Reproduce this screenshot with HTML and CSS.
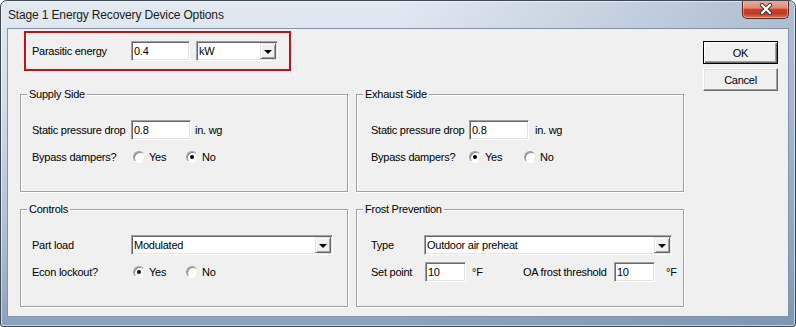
FILE: index.html
```html
<!DOCTYPE html>
<html lang="en">
<head>
    <meta charset="UTF-8">
    <meta name="viewport" content="width=device-width, initial-scale=1.0">
    <title>Stage 1 Energy Recovery Device Options</title>
    <link rel="stylesheet" href="styles.css">
</head>
<body>
    <div class="window">
        <div class="titlebar">
            <span class="title">Stage 1 Energy Recovery Device Options</span>
            <div class="close">
                <svg width="14" height="12" viewBox="0 0 14 12">
                    <path d="M3 2 L11 10 M11 2 L3 10" stroke="#3a3a3a" stroke-width="4.2" stroke-linecap="round"/>
                    <path d="M3 2 L11 10 M11 2 L3 10" stroke="#ffffff" stroke-width="2.2" stroke-linecap="round"/>
                </svg>
            </div>
        </div>

        <div class="client">
            <div class="main">
                <div class="highlight">
                    <span class="label">Parasitic energy</span>
                    <div class="textbox w59">0.4</div>
                    <div class="combo w82"><span>kW</span><span class="drop"></span></div>
                </div>

                <div class="groups">
                    <div class="group">
                        <span class="group-title">Supply Side</span>
                        <div class="row">
                            <span class="label">Static pressure drop</span>
                            <div class="textbox w60">0.8</div>
                            <span class="unit">in. wg</span>
                        </div>
                        <div class="row">
                            <span class="label">Bypass dampers?</span>
                            <label class="radio"><span class="mark"></span>Yes</label>
                            <label class="radio"><span class="mark checked"></span>No</label>
                        </div>
                    </div>

                    <div class="group right">
                        <span class="group-title">Exhaust Side</span>
                        <div class="row">
                            <span class="label lw98">Static pressure drop</span>
                            <div class="textbox w60">0.8</div>
                            <span class="unit wide">in. wg</span>
                        </div>
                        <div class="row">
                            <span class="label lw98">Bypass dampers?</span>
                            <label class="radio"><span class="mark checked"></span>Yes</label>
                            <label class="radio"><span class="mark"></span>No</label>
                        </div>
                    </div>

                    <div class="group">
                        <span class="group-title">Controls</span>
                        <div class="row">
                            <span class="label">Part load</span>
                            <div class="combo w202"><span>Modulated</span><span class="drop"></span></div>
                        </div>
                        <div class="row">
                            <span class="label">Econ lockout?</span>
                            <label class="radio"><span class="mark checked"></span>Yes</label>
                            <label class="radio"><span class="mark"></span>No</label>
                        </div>
                    </div>

                    <div class="group right">
                        <span class="group-title">Frost Prevention</span>
                        <div class="row">
                            <span class="label lw53">Type</span>
                            <div class="combo w248"><span>Outdoor air preheat</span><span class="drop"></span></div>
                        </div>
                        <div class="row">
                            <span class="label lw54">Set point</span>
                            <div class="textbox w41">10</div>
                            <span class="unit deg">°F</span>
                            <span class="label lw91">OA frost threshold</span>
                            <div class="textbox w41">10</div>
                            <span class="unit deg-end">°F</span>
                        </div>
                    </div>
                </div>
            </div>

            <div class="buttons">
                <button class="btn default">OK</button>
                <button class="btn">Cancel</button>
            </div>
        </div>
    </div>
</body>
</html>
```

FILE: styles.css
```css
body {
    margin: 0;
    background: #ffffff;
    font-family: "Liberation Sans", Arial, sans-serif;
    font-size: 11px;
    letter-spacing: -0.25px;
    color: #000;
}

.window {
    width: 796px;
    height: 327px;
    box-sizing: border-box;
    border: 1px solid #3d4854;
    border-radius: 7px 7px 3px 3px;
    background:
        linear-gradient(to right, rgba(255, 255, 255, 0) 50%, rgba(110, 138, 170, 0.45) 100%),
        linear-gradient(to bottom, #e2e9f1 0%, #d3dee9 30%, #aabcd0 75%, #8ba1ba 100%);
    box-shadow: inset 0 0 0 1px rgba(255, 255, 255, 0.55);
    overflow: hidden;
}

/* title bar */
.titlebar {
    height: 27px;
    display: flex;
    justify-content: space-between;
    align-items: flex-start;
}

.title {
    font-size: 12px;
    line-height: 14px;
    letter-spacing: -0.15px;
    padding: 7px 0 0 7px;
    color: #1b1b1b;
}

.close {
    width: 47px;
    height: 19px;
    margin: -1px 6px 0 0;
    box-sizing: border-box;
    border: 1px solid #6d2418;
    border-top: none;
    border-radius: 0 0 5px 5px;
    background: linear-gradient(to bottom, #eab1a2 0%, #dc8b76 45%, #c5432c 52%, #bf3a23 75%, #d8765c 100%);
    box-shadow: inset 0 0 0 1px rgba(255, 220, 210, 0.45);
    display: flex;
    align-items: center;
    justify-content: center;
}

/* client area */
.client {
    height: 289px;
    margin: 0 6px;
    box-sizing: border-box;
    border: 1px solid #8193a8;
    background: #f0f0f0;
    display: flex;
    padding: 2px 0 0 12px;
}

.main {
    width: 664px;
}

.highlight {
    width: 267px;
    height: 40px;
    box-sizing: border-box;
    margin-left: 4px;
    border: 2px solid #c1121c;
    padding-left: 6px;
    display: flex;
    align-items: center;
}

.label {
    width: 99px;
    flex-shrink: 0;
    white-space: nowrap;
}

.lw98 { width: 98px; }
.lw53 { width: 53px; }
.lw54 { width: 54px; }
.lw91 { width: 91px; }

.textbox, .combo {
    height: 20px;
    box-sizing: border-box;
    background: #fff;
    border: 1px solid;
    border-color: #a0a0a0 #ffffff #ffffff #a0a0a0;
    box-shadow: inset 1px 1px 0 #696969, inset -1px -1px 0 #e3e3e3;
    padding: 0 2px;
    line-height: 18px;
    flex-shrink: 0;
}

.w41 { width: 41px; }
.w59 { width: 59px; }
.w60 { width: 60px; }
.w82 { width: 82px; }
.w202 { width: 202px; }
.w248 { width: 248px; }

.highlight .textbox {
    margin-right: 6px;
}

.combo {
    display: flex;
    justify-content: space-between;
    align-items: center;
    padding: 0 1px 0 2px;
}

.drop {
    width: 16px;
    height: 16px;
    box-sizing: border-box;
    background: #f0f0f0;
    border: 1px solid;
    border-color: #e3e3e3 #696969 #696969 #e3e3e3;
    box-shadow: inset 1px 1px 0 #fff, inset -1px -1px 0 #a0a0a0;
    display: flex;
    align-items: center;
    justify-content: center;
}

.drop::after {
    content: '';
    border-left: 4px solid transparent;
    border-right: 4px solid transparent;
    border-top: 4px solid #000;
    margin-top: 1px;
}

/* group boxes */
.groups {
    margin-top: 23px;
    display: grid;
    grid-template-columns: 328px 328px;
    grid-template-rows: 98px 98px;
    column-gap: 8px;
    row-gap: 17px;
}

.group {
    position: relative;
    border: 1px solid #a0a0a0;
    box-shadow: inset 1px 1px 0 #fff, 1px 1px 0 #fff;
    padding: 25px 0 0 11px;
}

.group.right {
    padding-left: 14px;
}

.group-title {
    position: absolute;
    top: -7px;
    left: 6px;
    padding: 0 2px;
    line-height: 13px;
    background: #f0f0f0;
}

.row {
    height: 20px;
    display: flex;
    align-items: center;
    margin-bottom: 7px;
}

.unit {
    margin-left: 4px;
}

.unit.wide {
    margin-left: 6px;
}

.unit.deg {
    margin-left: 6px;
    width: 51px;
}

.unit.deg-end {
    margin-left: 11px;
}

.radio {
    display: flex;
    align-items: center;
    width: 53px;
    margin-left: 2px;
}

.radio + .radio {
    margin-left: 0;
}

.group.right .radio:first-of-type {
    margin-left: 0;
    width: 55px;
}

.mark {
    width: 12px;
    height: 12px;
    box-sizing: border-box;
    border-radius: 50%;
    background: #fff;
    border: 1px solid;
    border-color: #a0a0a0 #e8e8e8 #ffffff #a0a0a0;
    box-shadow: inset 1px 1px 0 #8a8a8a;
    margin-right: 4px;
    display: flex;
    align-items: center;
    justify-content: center;
}

.mark.checked::after {
    content: '';
    width: 4px;
    height: 4px;
    border-radius: 50%;
    background: #000;
}

/* buttons */
.buttons {
    margin: 10px 0 0 19px;
    display: flex;
    flex-direction: column;
    gap: 4px;
}

.btn {
    width: 75px;
    height: 23px;
    font-family: "Liberation Sans", Arial, sans-serif;
    font-size: 11px;
    letter-spacing: -0.25px;
    color: #000;
    background: #f0f0f0;
    border: 1px solid;
    border-color: #fff #696969 #696969 #fff;
    box-shadow: inset -1px -1px 0 #a0a0a0, inset 1px 1px 0 #e3e3e3;
    padding: 0;
}

.btn.default {
    border: 1px solid #000;
    box-shadow: inset 1px 1px 0 #fff, inset -1px -1px 0 #696969, inset -2px -2px 0 #a0a0a0;
}
```
